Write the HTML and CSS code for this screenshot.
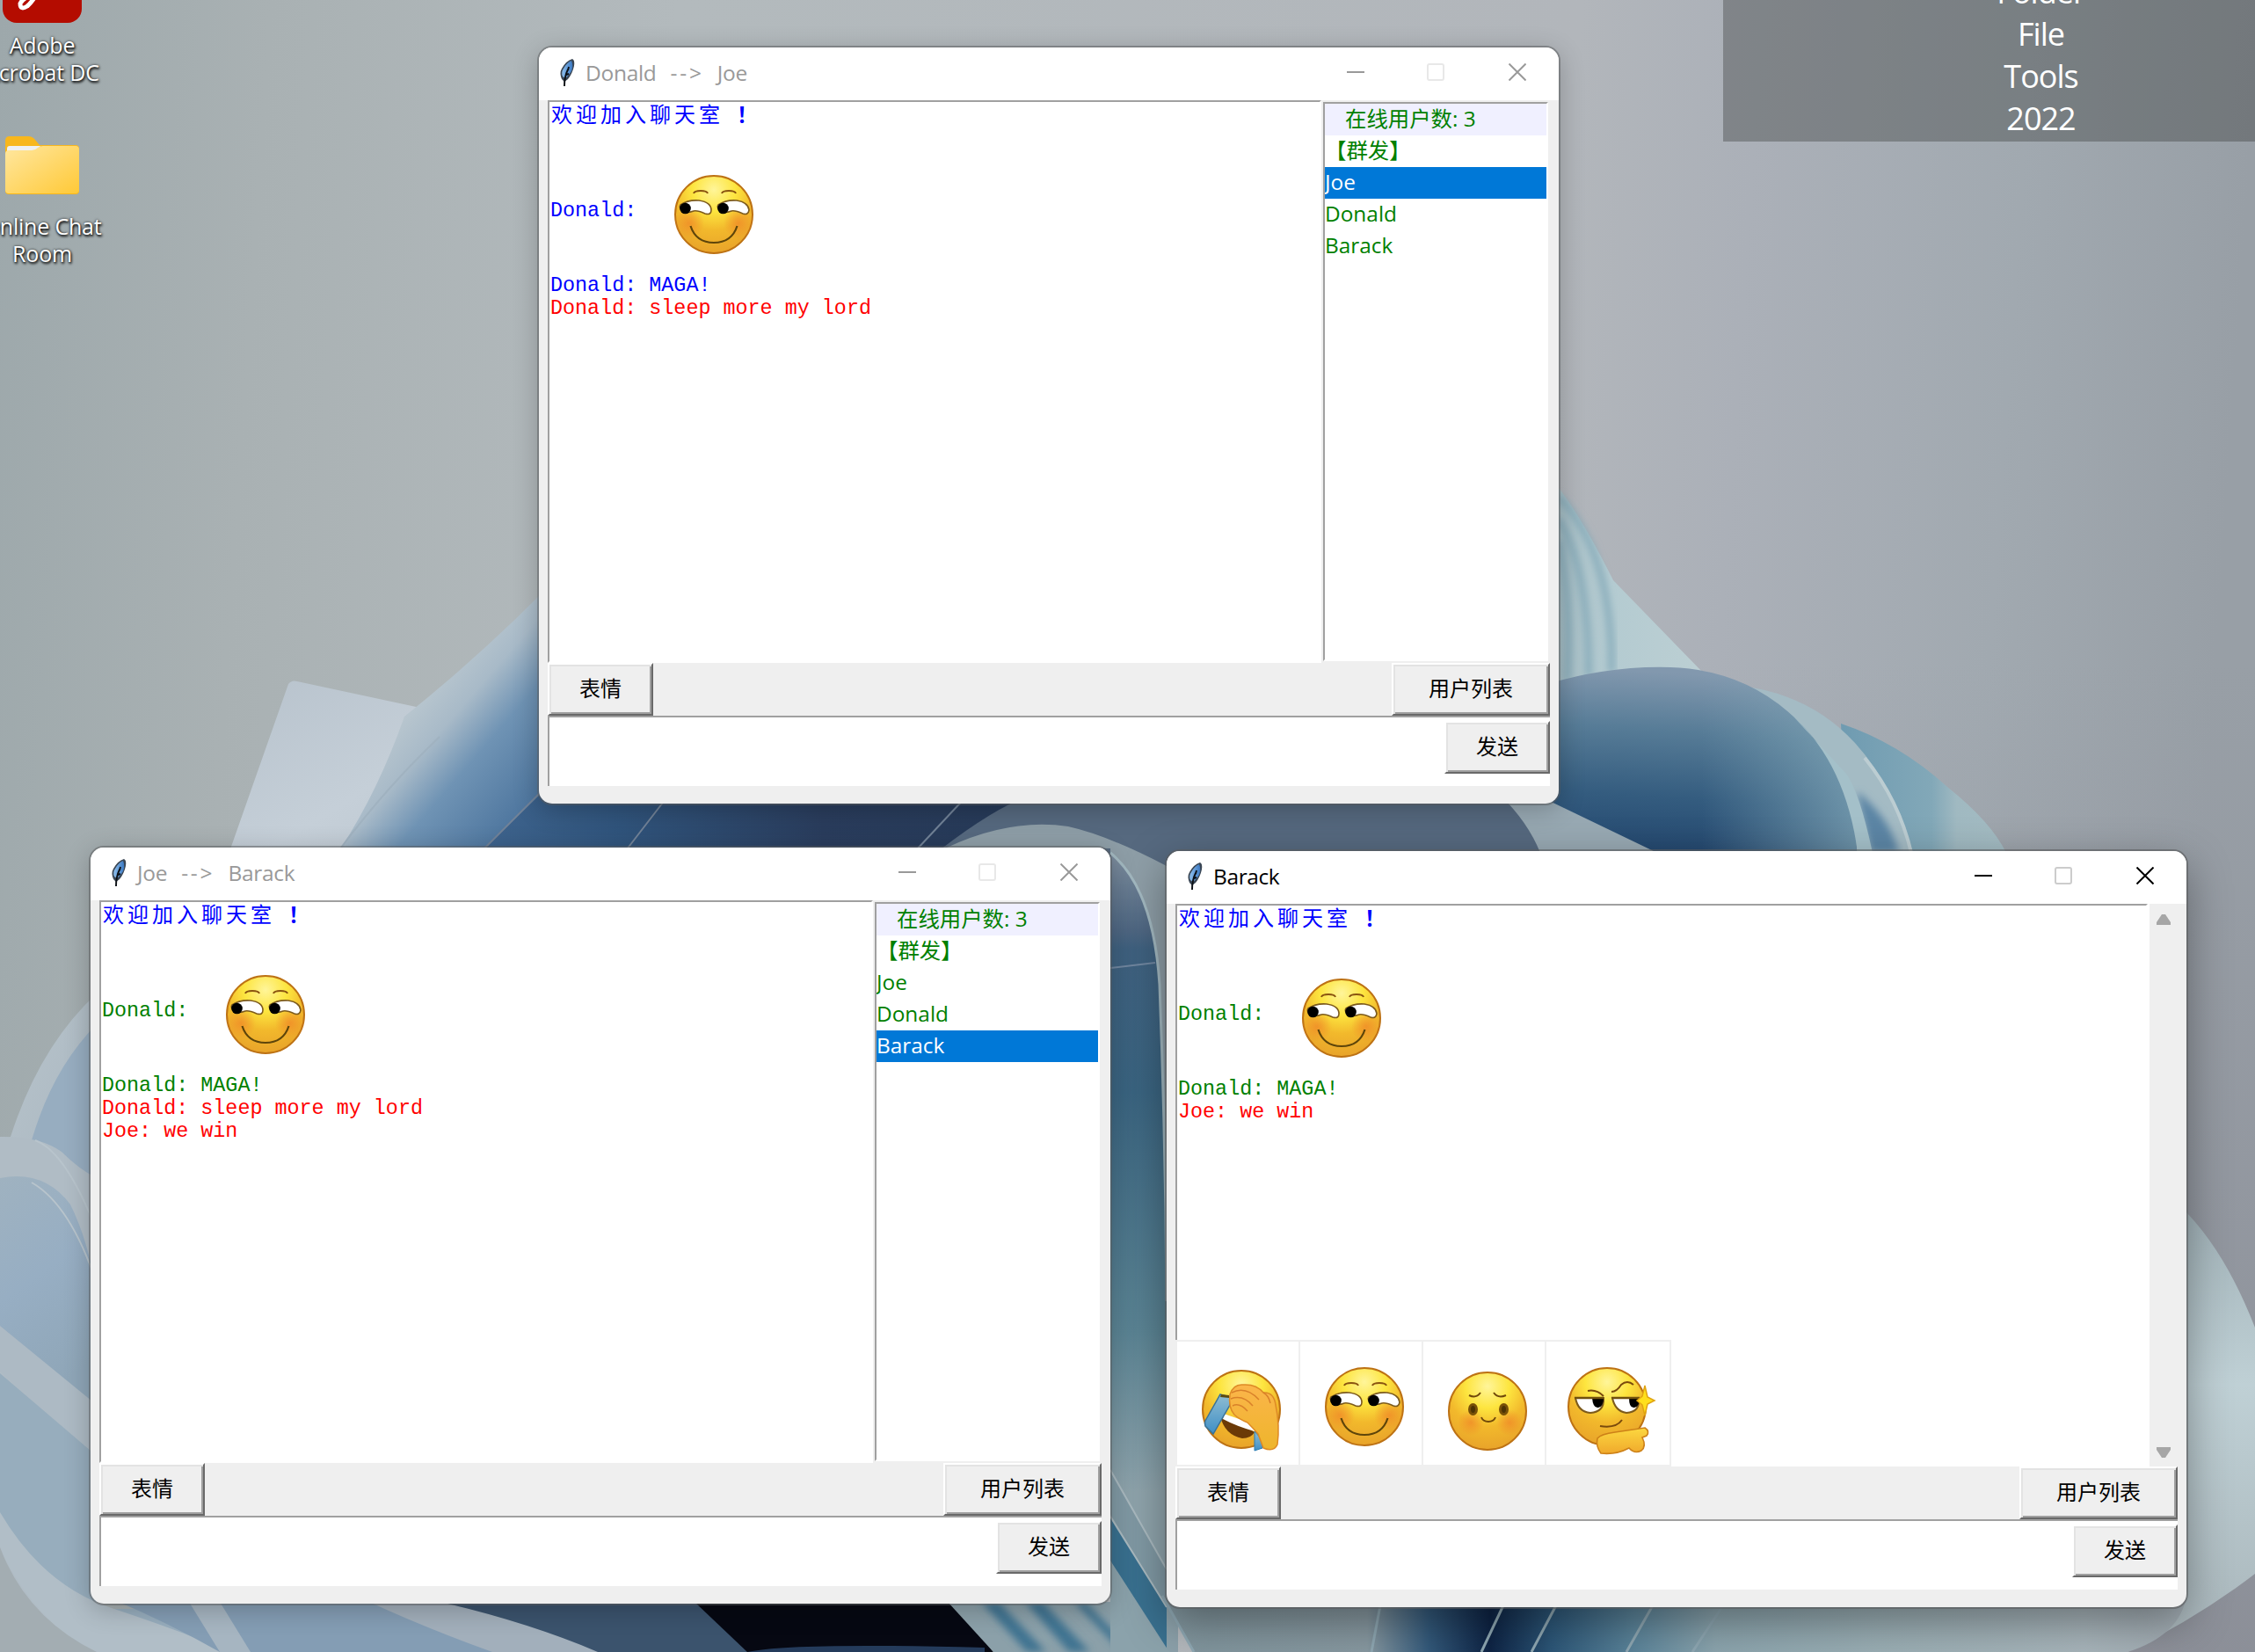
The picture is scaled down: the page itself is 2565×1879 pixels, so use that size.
FILE: index.html
```html
<!DOCTYPE html>
<html lang="zh-CN">
<head>
<meta charset="utf-8">
<title>Online Chat Room</title>
<link rel="stylesheet" href="styles.css">
</head>
<body>
<svg class="defs" width="0" height="0" aria-hidden="true">
  <defs>
    <radialGradient id="skin" cx="0.5" cy="0.18" r="0.8">
      <stop offset="0" stop-color="#fff59a"/><stop offset="0.35" stop-color="#fde53f"/>
      <stop offset="0.65" stop-color="#f2b92c"/><stop offset="1" stop-color="#e9a52a"/>
    </radialGradient>
    <radialGradient id="blush"><stop offset="0" stop-color="#f08528" stop-opacity=".7"/><stop offset="1" stop-color="#f08528" stop-opacity="0"/></radialGradient>
    <linearGradient id="hand" x1="0" y1="0" x2="0" y2="1"><stop offset="0" stop-color="#fbb54a"/><stop offset="1" stop-color="#eeb52c"/></linearGradient>
    <linearGradient id="palm" x1="0" y1="0" x2="0" y2="1"><stop offset="0" stop-color="#fcd840"/><stop offset="1" stop-color="#f0a92c"/></linearGradient>
    <linearGradient id="tear" x1="0" y1="0" x2="0" y2="1"><stop offset="0" stop-color="#8fbdd2"/><stop offset="1" stop-color="#3f8fc6"/></linearGradient>
    <linearGradient id="plume" x1="0" y1="0" x2="1" y2="0"><stop offset="0" stop-color="#8fc0ee"/><stop offset="1" stop-color="#3a78c2"/></linearGradient>
    <symbol id="sly" viewBox="0 0 138 140">
      <circle cx="73" cy="74" r="44" fill="url(#skin)" stroke="#bd7214" stroke-width="2"/>
      <circle cx="45" cy="84" r="17" fill="url(#blush)"/><circle cx="101" cy="84" r="17" fill="url(#blush)"/>
      <path d="M50 50q1-3 8-3t8 3M82 50q1-3 8-3t8 3" fill="none" stroke="#8a5410" stroke-width="2"/>
      <path d="M35 63Q44 57 56 58Q70 60 70 69Q70 75 63 73Q54 69 50 70Q42 73 37 70Q33 66 35 63Z" fill="#fff" stroke="#7c5a1c" stroke-width="1.600"/>
      <path d="M78 63Q87 57 99 58Q112 60 113 69Q112 75 106 73Q97 69 93 70Q85 73 80 70Q76 66 78 63Z" fill="#fff" stroke="#7c5a1c" stroke-width="1.600"/>
      <circle cx="40.500" cy="67" r="6.300"/><circle cx="83.500" cy="67" r="6.300"/>
      <path d="M46.500 87C51 101 60 106 73 106S95 101 99.500 87" fill="none" stroke="#5e450a" stroke-width="2.200"/>
    </symbol>
    <symbol id="facepalm" viewBox="0 0 138 140">
      <circle cx="73" cy="77" r="44" fill="url(#skin)" stroke="#bd7214" stroke-width="2"/>
      <path d="M49 85Q70 88 88 103Q84 110 74 110Q54 106 49 85Z" fill="#6b3a07"/>
      <path d="M53 82L88 94V102Q67 96 52 88Z" fill="#fff"/>
      <path d="M49 60L60 63V72L41 105L32 96Q31 92 32 90Z" fill="url(#tear)" stroke="#3a7297" stroke-width="1.500"/>
      <path d="M50 60l9 1v3l-10-1z" fill="#5c4b12"/>
      <path d="M88 102L97 112V121L88 124Z" fill="url(#tear)" stroke="#2a7db3" stroke-width="1"/>
      <path d="M60 60Q64 48 75 49Q90 48 98 58Q110 57 112 72Q117 96 114 117Q110 126 98 121L92 105Q87 99 80 92Q70 88 65 83Q58 75 60 60Z" fill="url(#hand)" stroke="#de8a25" stroke-width="1.500"/>
      <path d="M62 58Q78 50 93 66M61 65Q75 60 86 73M63 73Q71 69 80 79M98 58Q104 61 106 70" fill="none" stroke="#d9812a" stroke-width="1.500"/>
    </symbol>
    <symbol id="shy" viewBox="0 0 138 140">
      <circle cx="73" cy="79" r="44" fill="url(#skin)" stroke="#bd7214" stroke-width="2"/>
      <circle cx="54" cy="92" r="15" fill="url(#blush)"/><circle cx="98" cy="92" r="15" fill="url(#blush)"/>
      <ellipse cx="56.500" cy="77" rx="5.500" ry="7" fill="#775008"/><ellipse cx="91.500" cy="77" rx="5.500" ry="7" fill="#775008"/>
      <ellipse cx="56.500" cy="77" rx="2.500" ry="4" fill="#4c3304"/><ellipse cx="91.500" cy="77" rx="2.500" ry="4" fill="#4c3304"/>
      <path d="M52 61Q60 65 65 58M80 58Q85 65 94 61M66 86Q68 91 74 91T82 86" fill="none" stroke="#70490a" stroke-width="2"/>
    </symbol>
    <symbol id="smug" viewBox="0 0 138 140">
      <circle cx="69" cy="74" r="44" fill="url(#skin)" stroke="#bd7214" stroke-width="2"/>
      <path d="M33 64H65Q66 80 50 81Q36 80 33 64ZM75 64H105Q107 80 91 81Q78 79 75 64Z" fill="#fff" stroke="#7c5a1c" stroke-width="2"/>
      <path d="M52 64h13q0 10-6 11t-7-11zM94 64h12q0 10-6 11t-6-11z" fill="#000"/>
      <path d="M32 64H65M74 64H106" stroke="#70500e" stroke-width="2.500"/>
      <path d="M47 56Q57 54 65 62M74 57Q80 57 85 49Q92 43 99 49M61 96Q79 99 86 89" fill="none" stroke="#7a4a0c" stroke-width="2"/>
      <path d="M112 50L115 63L123 67L115 71L112 84L109 72L103 67L109 62Z" fill="#ffdf1c" stroke="#e0a312" stroke-width="1.500"/>
      <path d="M58 110Q62 105 78 103L112 98Q118 102 114 107L109 109Q114 119 108 124Q100 128 94 121Q79 129 62 127Q56 119 58 110Z" fill="url(#palm)" stroke="#cd8118" stroke-width="1.600"/>
    </symbol>
    <symbol id="feather" viewBox="0 0 18 32">
      <path d="M15 0Q18 1 17 8Q15 17 10 23L6 26L3 23Q0 16 3 11Q8 2 15 0Z" fill="#3a4654"/>
      <path d="M14 2Q16.500 8 14 14Q10 20 7 22L4 20Q2 15 5 11Q9 4 14 2Z" fill="url(#plume)"/>
      <path d="M10 12Q6 20 6 31M11 9l-1 4M8 18l3-1" fill="none" stroke="#0b0f14" stroke-width="1.900"/>
    </symbol>
  </defs>
</svg>

<main class="desktop">
  <svg class="wallpaper" viewBox="0 0 2565 1879" preserveAspectRatio="none" aria-hidden="true">
    <defs>
      <linearGradient id="sky" x1="0" y1="0" x2="1" y2="0.05">
        <stop offset="0" stop-color="#9da8ab"/><stop offset="0.12" stop-color="#a9b1b3"/><stop offset="0.3" stop-color="#b3babd"/>
        <stop offset="0.7" stop-color="#b2b6bb"/><stop offset="0.78" stop-color="#abb0b8"/><stop offset="0.9" stop-color="#a1a9b0"/><stop offset="1" stop-color="#989fa6"/>
      </linearGradient>
      <linearGradient id="dusk" x1="0" y1="0" x2="0" y2="1"><stop offset="0.4" stop-color="#8b8c98" stop-opacity="0"/><stop offset="1" stop-color="#84858f" stop-opacity=".6"/></linearGradient>
      <linearGradient id="sheet" x1="0" y1="0" x2="1" y2="1"><stop offset="0" stop-color="#b6c1cb"/><stop offset=".5" stop-color="#c5cfd8"/><stop offset="1" stop-color="#b7c2cb"/></linearGradient>
      <linearGradient id="petal" gradientUnits="userSpaceOnUse" x1="450" y1="830" x2="600" y2="960">
        <stop offset="0" stop-color="#b7c5ce"/><stop offset=".2" stop-color="#a8bac8"/><stop offset=".45" stop-color="#6f93b4"/><stop offset="1" stop-color="#446d98"/>
      </linearGradient>
      <linearGradient id="deep" x1="0" y1="0" x2="1" y2="0"><stop offset="0" stop-color="#3f658f"/><stop offset=".25" stop-color="#30547c"/><stop offset=".6" stop-color="#2a3d5d"/><stop offset="1" stop-color="#263a58"/></linearGradient>
      <linearGradient id="cone" x1="0" y1="0" x2="1" y2="0"><stop offset="0" stop-color="#a5bcc3"/><stop offset=".4" stop-color="#b4cbd1"/><stop offset="1" stop-color="#bccfd3"/></linearGradient>
      <linearGradient id="ball" x1="0.1" y1="0" x2="0" y2="1"><stop offset="0" stop-color="#8298ae"/><stop offset=".3" stop-color="#577c97"/><stop offset=".65" stop-color="#345c7f"/><stop offset="1" stop-color="#21446c"/></linearGradient>
      <linearGradient id="ballside" x1="0" y1="0" x2="1" y2="0"><stop offset=".5" stop-color="#7fa4b5" stop-opacity="0"/><stop offset="1" stop-color="#88adbc" stop-opacity=".7"/></linearGradient>
      <linearGradient id="lobe" x1="0" y1="0" x2="1" y2="0"><stop offset="0" stop-color="#6f9bb1"/><stop offset=".55" stop-color="#82a8b8"/><stop offset=".7" stop-color="#a0b9c1"/><stop offset="1" stop-color="#a3bbc2"/></linearGradient>
      <linearGradient id="stem" x1="0" y1="0" x2="0" y2="1"><stop offset="0" stop-color="#7d8d9e"/><stop offset=".1" stop-color="#4d6682"/><stop offset=".12" stop-color="#3f617f"/><stop offset=".3" stop-color="#3a6480"/><stop offset=".6" stop-color="#5b8494"/><stop offset=".8" stop-color="#8fa4ac"/><stop offset="1" stop-color="#8fa4ac"/></linearGradient>
      <linearGradient id="left" x1="0" y1="0" x2="0.3" y2="1"><stop offset="0" stop-color="#9fb2c0"/><stop offset=".5" stop-color="#97aec3"/><stop offset="1" stop-color="#8fa6b8"/></linearGradient>
      <linearGradient id="rim" x1="0" y1="0" x2="1" y2="1"><stop offset="0" stop-color="#b8c4cc"/><stop offset="1" stop-color="#aab7c0"/></linearGradient>
      <linearGradient id="right" x1="0" y1="0" x2="0" y2="1"><stop offset="0" stop-color="#a1b2b8"/><stop offset=".4" stop-color="#bfd0d5"/><stop offset="1" stop-color="#a9b6bb"/></linearGradient>
      <linearGradient id="floor" x1="0" y1="0" x2="1" y2="0">
        <stop offset="0" stop-color="#7f949c"/><stop offset=".2" stop-color="#8798a0"/><stop offset=".26" stop-color="#33597a"/><stop offset=".32" stop-color="#0e2445"/><stop offset=".38" stop-color="#2c5677"/><stop offset=".46" stop-color="#5a8399"/><stop offset=".54" stop-color="#8ba4ad"/><stop offset=".7" stop-color="#9aaeb4"/><stop offset=".9" stop-color="#a7b4ba"/><stop offset="1" stop-color="#a0aab1"/>
      </linearGradient>
      <filter id="soft"><feGaussianBlur stdDeviation="4"/></filter>
    </defs>
    <rect width="2565" height="1879" fill="url(#sky)"/>
    <rect width="2565" height="1879" x="1900" fill="url(#dusk)"/>
    <path d="M328 778Q332 773 338 775L478 805L640 760V1000H250Z" fill="url(#sheet)"/>
    <path d="M388 964Q430 900 460 815Q560 735 650 640V1000H380Z" fill="url(#petal)"/>
    <path d="M388 964Q440 895 500 838" fill="none" stroke="#a0b2c0" stroke-width="2"/>
    <path d="M550 966L613 905H1200V1000H540Z" fill="url(#deep)"/>
    <path d="M550 966L613 903M713 966L760 905M1043 966L1100 905" stroke="#718297" stroke-width="2"/>
    <path d="M1070 966Q1130 920 1170 905H1760V1000H1070Z" fill="#56697f"/>
    <path d="M1077 964Q1150 930 1215 940Q1260 950 1327 985V1879H1263V965Z" fill="#8e9ea7"/>
    <path d="M1263 970Q1312 1010 1319 1120Q1326 1300 1327 1480V1879H1263Z" fill="url(#stem)"/>
    <path d="M1263 970Q1312 1010 1319 1120Q1326 1300 1327 1480" fill="none" stroke="#a3b9c1" stroke-width="3"/>
    <path d="M1263 1101L1314 1095" stroke="#7187a0" stroke-width="2"/>
    <path d="M1773 555Q1800 590 1835 660L1936 764L1940 800H1760Z" fill="url(#cone)"/>
    <g fill="none" stroke="#7fa6b6" stroke-width="6" filter="url(#soft)">
      <path d="M1773 565Q1835 630 1833 765M1773 590Q1808 650 1807 770M1773 615Q1788 680 1783 775"/>
    </g>
    <path d="M2094 823Q2160 845 2215 895Q2265 935 2282 970H2100Z" fill="url(#lobe)"/>
    <path d="M1980 780Q2060 790 2110 845Q2155 895 2175 970H2050Z" fill="#a4bbc4"/>
    <path d="M2128 970L2112 900Q2150 930 2160 970Z" fill="#5c85a5" filter="url(#soft)"/>
    <path d="M2121 862Q2160 910 2174 970" fill="none" stroke="#bccdd2" stroke-width="4"/>
    <path d="M1760 778Q1830 757 1900 759Q1990 762 2050 825Q2112 890 2112 975H1760Z" fill="url(#ball)"/>
    <path d="M1760 778Q1830 757 1900 759Q1990 762 2050 825Q2112 890 2112 975H1760Z" fill="url(#ballside)"/>
    <path d="M2040 815Q2100 870 2113 970L2130 970Q2115 900 2100 880" fill="#a4c0c9"/>
    <path d="M1707 905H1750L1885 970H1752Q1738 935 1707 905Z" fill="#98a9b3"/>
    <path d="M12 1293Q45 1190 110 1130V1345L0 1300Z" fill="url(#rim)"/>
    <path d="M36 1297Q60 1215 110 1165V1345L60 1310Z" fill="#97adc0"/>
    <path d="M0 1293Q45 1292 70 1310Q90 1330 110 1340V1879H0Z" fill="#b0bcc5"/>
    <path d="M0 1340Q50 1330 80 1370Q100 1410 110 1470V1600L0 1512Z" fill="url(#left)"/>
    <path d="M36 1345Q80 1370 110 1460M40 1297Q75 1310 110 1400" fill="none" stroke="#b8c4cc" stroke-width="2"/>
    <path d="M0 1508L110 1598V1660L0 1560Z" fill="#adbac4"/>
    <path d="M0 1562L110 1656V1830H560V1879H160Q60 1830 0 1740Z" fill="#97adbd"/>
    <path d="M0 1720Q50 1805 130 1830Q220 1860 260 1879H100Q30 1830 0 1760Z" fill="#b1bec7"/>
    <path d="M0 1760Q30 1840 110 1879H0Z" fill="#a3adb2"/>
    <path d="M130 1820H860V1879H250Q190 1845 130 1820Z" fill="#849db4"/>
    <path d="M215 1822L250 1879H285L250 1822Z" fill="#a6b5c1"/>
    <path d="M420 1822H520Q620 1850 700 1879H560Q480 1850 420 1822Z" fill="#a2afbb"/>
    <path d="M500 1822H860L900 1879H680Q600 1845 500 1822Z" fill="#3b536d"/>
    <path d="M790 1822H1085L1130 1879H850Z" fill="#060812"/>
    <path d="M850 1879Q900 1868 1120 1874V1879Z" fill="#243b5b"/>
    <path d="M1078 1822H1340V1879H1130Z" fill="#8ba0a9"/>
    <g fill="#3f7391" filter="url(#soft)"><path d="M1116 1822H1136L1190 1879H1168ZM1166 1822H1186L1240 1879H1216ZM1222 1822H1234L1290 1879H1276Z"/></g>
    <path d="M1263 1672L1327 1785V1830L1263 1722Z" fill="#8099a4"/>
    <path d="M1263 1725L1327 1828V1879L1263 1790Z" fill="#39708f"/>
    <path d="M1263 1775L1330 1879H1263Z" fill="#8ba2ab"/>
    <path d="M1263 1672L1327 1785M1263 1725L1327 1828" stroke="#aabac0" stroke-width="2"/>
    <path d="M2480 1372Q2530 1420 2565 1510V1790Q2500 1840 2420 1879H1400V1820H2480Z" fill="url(#right)"/>
    <path d="M1322 1815H2487Q2480 1860 2420 1879H1358Z" fill="url(#floor)"/>
    <path d="M1322 1815L1358 1879M1570 1826L1560 1879M1710 1826L1685 1879M1770 1826L1742 1879M1880 1826L1850 1879M1960 1826L1925 1879" stroke="#8ea7b2" stroke-width="3"/>
  </svg>

  <section class="shortcuts">
    <div class="shortcut">
      <svg class="shortcut-icon acrobat" viewBox="0 0 90 90"><rect width="90" height="90" rx="16" fill="#b40c00"/><path d="M38 58Q24 60 20 68Q20 76 28 71Q34 66 42 52" fill="none" stroke="#fff" stroke-width="5"/></svg>
      <p>Adobe<br>Acrobat DC</p>
    </div>
    <div class="shortcut">
      <svg class="shortcut-icon folder" viewBox="0 0 84 67"><defs><linearGradient id="fold" x1="0" y1="0" x2="1" y2="1"><stop offset="0" stop-color="#ffe7a0"/><stop offset="1" stop-color="#ffc937"/></linearGradient></defs><path d="M0 5Q0 0 5 0H26Q31 0 34 4L39 10H80Q84 10 84 14V62Q84 66 80 66H4Q0 66 0 62Z" fill="#f8b71d"/><path d="M2 14Q2 11 5 11H40L34 20H2Z" fill="#eef0f2"/><path d="M0 20Q0 16 4 16H30Q34 16 37 13Q39 11 43 11H80Q84 11 84 15V61Q84 65 80 65H4Q0 65 0 61Z" fill="url(#fold)"/></svg>
      <p>Online Chat<br>Room</p>
    </div>
  </section>

  <aside class="widget"><p>Folder</p><p>File</p><p>Tools</p><p>2022</p></aside>

  <section class="window window-donald">
    <header class="titlebar">
      <svg class="feather"><use href="#feather"/></svg>
      <h1>Donald<span class="arrow">--&gt;</span>Joe</h1>
      <svg class="controls" viewBox="0 0 204 20"><path class="min" d="M0 10H20"/><rect class="max" x="92" y="1" width="18" height="18" rx="2"/><path class="close" d="M184.500 .5L203.500 19.500M203.500 .5L184.500 19.500"/></svg>
    </header>
    <div class="main">
      <div class="log">
        <p class="welcome">欢迎加入聊天室<span class="bang">！</span></p>
        <p class="blue with-face">Donald: <svg class="face"><use href="#sly"/></svg></p>
        <p class="blue">Donald: MAGA!</p>
        <p class="red">Donald: sleep more my lord</p>
      </div>
      <ul class="users"><li class="count">在线用户数: 3</li><li>【群发】</li><li class="selected">Joe</li><li>Donald</li><li>Barack</li></ul>
    </div>
    <div class="toolbar"><button>表情</button><button class="wide">用户列表</button></div>
    <div class="entry"><button>发送</button></div>
  </section>

  <section class="window window-joe">
    <header class="titlebar">
      <svg class="feather"><use href="#feather"/></svg>
      <h1>Joe<span class="arrow">--&gt;</span>Barack</h1>
      <svg class="controls" viewBox="0 0 204 20"><path class="min" d="M0 10H20"/><rect class="max" x="92" y="1" width="18" height="18" rx="2"/><path class="close" d="M184.500 .5L203.500 19.500M203.500 .5L184.500 19.500"/></svg>
    </header>
    <div class="main">
      <div class="log">
        <p class="welcome">欢迎加入聊天室<span class="bang">！</span></p>
        <p class="green with-face">Donald: <svg class="face"><use href="#sly"/></svg></p>
        <p class="green">Donald: MAGA!</p>
        <p class="red">Donald: sleep more my lord</p>
        <p class="red">Joe: we win</p>
      </div>
      <ul class="users"><li class="count">在线用户数: 3</li><li>【群发】</li><li>Joe</li><li>Donald</li><li class="selected">Barack</li></ul>
    </div>
    <div class="toolbar"><button>表情</button><button class="wide">用户列表</button></div>
    <div class="entry"><button>发送</button></div>
  </section>

  <section class="window window-barack active">
    <header class="titlebar">
      <svg class="feather"><use href="#feather"/></svg>
      <h1>Barack</h1>
      <svg class="controls" viewBox="0 0 204 20"><path class="min" d="M0 10H20"/><rect class="max" x="92" y="1" width="18" height="18" rx="2"/><path class="close" d="M184.500 .5L203.500 19.500M203.500 .5L184.500 19.500"/></svg>
    </header>
    <div class="main">
      <div class="log">
        <p class="welcome">欢迎加入聊天室<span class="bang">！</span></p>
        <p class="green with-face">Donald: <svg class="face"><use href="#sly"/></svg></p>
        <p class="green">Donald: MAGA!</p>
        <p class="red">Joe: we win</p>
      </div>
      <div class="scrollbar">
        <svg viewBox="0 0 16 12"><path d="M0 12V9L6 0H10L16 9V12Z"/></svg>
        <svg viewBox="0 0 16 12"><path d="M0 0V3L6 12H10L16 3V0Z"/></svg>
      </div>
      <div class="picker">
        <svg class="face"><use href="#facepalm"/></svg><svg class="face"><use href="#sly"/></svg><svg class="face"><use href="#shy"/></svg><svg class="face"><use href="#smug"/></svg>
      </div>
    </div>
    <div class="toolbar"><button>表情</button><button class="wide">用户列表</button></div>
    <div class="entry"><button>发送</button></div>
  </section>
</main>
</body>
</html>
```
FILE: styles.css
```css
* { box-sizing: border-box; margin: 0; padding: 0; }
body { width: 2565px; height: 1879px; overflow: hidden; }
.defs { position: absolute; }
.desktop {
  position: relative; width: 2565px; height: 1879px; overflow: hidden;
  font-family: "Open Sans", "Noto Sans", "Noto Sans CJK SC", sans-serif; font-size: 24px;
}
.wallpaper { position: absolute; inset: 0; width: 100%; height: 100%; }

.shortcuts { position: absolute; left: -42px; top: -64px; width: 180px; display: flex; flex-direction: column; }
.shortcut { display: flex; flex-direction: column; align-items: center; height: 219px; color: #fff; text-align: center; line-height: 31px; font-size: 25px; letter-spacing: -.2px; text-shadow: 1px 2px 3px #000, 0 0 3px rgba(0,0,0,.8); }
.shortcut p { white-space: nowrap; }
.acrobat { width: 90px; height: 90px; margin-bottom: 10px; }
.folder { width: 84px; height: 67px; margin-bottom: 20px; }

.widget {
  position: absolute; left: 1960px; top: -40px; width: 605px; height: 201px;
  padding: 7px 0 0 118px; background: rgba(44,46,44,.34); color: #fff;
  text-align: center; font-size: 36px; line-height: 48px; letter-spacing: -1px;
}

.window {
  position: absolute; width: 1160px; height: 860px; display: flex; flex-direction: column;
  background: #efefef; border-radius: 15px; overflow: hidden;
  box-shadow: 0 0 0 2px rgba(90,92,94,.5), 0 6px 30px rgba(0,0,0,.24);
}
.window-donald { left: 613px; top: 54px; }
.window-joe { left: 103px; top: 964px; }
.window-barack { left: 1327px; top: 968px; }
.active { box-shadow: 0 0 0 2px rgba(90,92,94,.6), 0 16px 50px rgba(0,0,0,.38); }

.titlebar { flex: none; height: 60px; padding: 0 37px 0 23px; background: #fff; display: flex; align-items: center; color: #999; }
.feather { width: 18px; height: 32px; margin: -2px 12px 0 0; }
.titlebar h1 { flex: 1; margin-top: -4px; font-size: 24.5px; font-weight: 400; letter-spacing: -.3px; white-space: pre; }
.arrow { margin: 0 15px 0 16px; letter-spacing: 2.8px; }
.controls { width: 204px; height: 20px; margin-top: -4px; fill: none; stroke: #999; stroke-width: 2; }
.controls .max { stroke: #e8e8e8; }
.active .titlebar { color: #000; }
.active .titlebar h1 { letter-spacing: -.4px; }
.active .controls { stroke: #000; }
.active .controls .max { stroke: #ccc; }

.main { position: relative; flex: none; height: 640px; margin-left: 10px; display: flex; gap: 2px; }
.log {
  width: 880px; height: 640px; padding: 2px 1px; background: #fff;
  border: 2px solid #fff; border-top-color: #a0a0a0; border-left-color: #a0a0a0;
  font-family: "Liberation Mono", "Noto Sans CJK SC", monospace; font-size: 23.4px; line-height: 30px;
}
.log p { height: 26px; white-space: pre; }
.log .welcome { height: 52px; padding-left: 1px; color: #00f; font-family: "Noto Sans CJK SC", sans-serif; font-size: 24px; letter-spacing: 4px; line-height: 22px; }
.bang { margin-left: 15px; font-weight: 700; }
.log .with-face { display: flex; align-items: center; height: 140px; line-height: 32px; }
.face { flex: none; width: 138px; height: 140px; }
.log .face { margin-left: 1px; }
.blue { color: #00f; }
.green { color: #008000; }
.red { color: #f00; }

.users {
  width: 256px; height: 636px; margin-top: 2px; list-style: none; background: #fff; color: #008000;
  border: 2px solid #fff; border-top-color: #a0a0a0; border-left-color: #a0a0a0;
}
.users li { height: 36px; font-size: 24.4px; line-height: 33px; white-space: pre; overflow: hidden; }
.users .count { padding-left: 23px; background: #f0f0ff; }
.users .selected { background: #0078d7; color: #fff; }

.active .log { width: 1106px; margin-right: 2px; }
.active .main { gap: 0; background: #fff; }
.scrollbar { width: 42px; height: 640px; padding: 12px 18px 10px 8px; background: #efefef; display: flex; flex-direction: column; justify-content: space-between; }
.scrollbar svg { width: 16px; height: 12px; fill: #a6a6a6; }
.picker {
  position: absolute; left: 0; bottom: 0; display: flex; gap: 2px; padding: 2px; background: #efefef;
}
.picker .face { background: #fff; }
.picker .face:last-child { width: 140px; padding-right: 2px; }

.toolbar { flex: none; width: 1140px; height: 60px; margin-left: 10px; display: flex; justify-content: space-between; }
button {
  width: 120px; height: 60px; padding: 0 0 5px; background: #efefef; color: #000; font: inherit;
  border: 2px solid; border-color: #fff #696969 #696969 #fff;
  box-shadow: inset 2px 2px #e3e3e3, inset -2px -2px #a0a0a0;
}
button.wide { width: 180px; }
.entry {
  flex: none; width: 1140px; height: 80px; margin-left: 10px; padding-top: 4px; background: #fff;
  border-top: 2px solid #a0a0a0; border-left: 2px solid #a0a0a0; display: flex; justify-content: flex-end;
}
```
